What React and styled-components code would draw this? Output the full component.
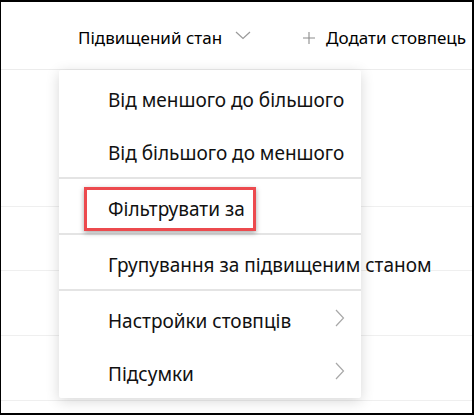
import React from 'react'
import styled, { createGlobalStyle } from 'styled-components'

const GlobalStyle = createGlobalStyle`
  html, body {
    margin: 0;
    padding: 0;
    background: #fff;
  }
  body {
    font-family: "Noto Sans", "Open Sans", sans-serif;
    color: #000;
  }
`

const rows = [137, 64, 65, 65]

const sortItems = ['Від меншого до більшого', 'Від більшого до меншого']

export default function App() {
  return (
    <>
      <GlobalStyle />
      <Frame>
        <Header>
          <ColumnTitle>Підвищений стан</ColumnTitle>
          <HeaderChevron width="16" height="9" viewBox="0 0 16 9">
            <path d="M1 1 L8 7.5 L15 1" />
          </HeaderChevron>
          <AddColumn>
            <PlusIcon width="12" height="12" viewBox="0 0 12 12">
              <path d="M6 0 V12 M0 6 H12" />
            </PlusIcon>
            Додати стовпець
          </AddColumn>
        </Header>

        {rows.map((h, i) => (
          <GridRow key={i} $height={h} />
        ))}

        <Menu>
          <Section>
            {sortItems.map((label) => (
              <Item key={label}>{label}</Item>
            ))}
          </Section>
          <Divider />
          <Section>
            <Highlight />
            <Item>Фільтрувати за</Item>
          </Section>
          <Divider />
          <Section>
            <Item>Групування за підвищеним станом</Item>
          </Section>
          <Divider />
          <Section>
            <Item>
              Настройки стовпців
              <Chevron width="10" height="18" viewBox="0 0 10 18">
                <path d="M1 1 L8.5 9 L1 17" />
              </Chevron>
            </Item>
            <Item>
              Підсумки
              <Chevron width="10" height="18" viewBox="0 0 10 18">
                <path d="M1 1 L8.5 9 L1 17" />
              </Chevron>
            </Item>
          </Section>
        </Menu>
      </Frame>
    </>
  )
}

const Frame = styled.div`
  position: relative;
  width: 474px;
  height: 415px;
  box-sizing: border-box;
  border: 2px solid #000;
  border-left-width: 1px;
  overflow: hidden;
  background: #fff;
`

const Header = styled.div`
  display: flex;
  align-items: center;
  height: 68px;
  box-sizing: border-box;
  padding-left: 77px;
  padding-top: 4px;
  border-bottom: 1px solid #ececec;
`

const ColumnTitle = styled.span`
  font-size: 17px;
  white-space: nowrap;
`

const HeaderChevron = styled.svg`
  margin-left: 13px;
  margin-top: -4px;
  fill: none;
  stroke: #9a9a9a;
  stroke-width: 1.2;
`

const AddColumn = styled.div`
  display: flex;
  align-items: center;
  gap: 11px;
  margin-left: 52px;
  font-size: 17px;
  white-space: nowrap;
`

const PlusIcon = styled.svg`
  fill: none;
  stroke: #8c8c8c;
  stroke-width: 1.1;
`

const GridRow = styled.div`
  height: ${(p) => p.$height - 1}px;
  border-bottom: 1px solid #efefef;
`

const Menu = styled.div`
  position: absolute;
  left: 58px;
  top: 68px;
  width: 302px;
  background: #fff;
  box-shadow: 0 3px 14px rgba(0, 0, 0, 0.16);
  border-radius: 2px;
`

const Section = styled.div`
  position: relative;
  display: flex;
  flex-direction: column;
  gap: 31px;
  padding: 19px 0 13px;
`

const Divider = styled.div`
  height: 2px;
  background: #e4e4e4;
`

const Item = styled.div`
  position: relative;
  display: flex;
  align-items: center;
  height: 22px;
  padding-left: 49px;
  padding-right: 16px;
  font-size: 19px;
  line-height: 22px;
  white-space: nowrap;
  color: #111;
`

const Chevron = styled.svg`
  margin-left: auto;
  margin-top: -6px;
  fill: none;
  stroke: #a8a8a8;
  stroke-width: 1.2;
`

const Highlight = styled.div`
  position: absolute;
  left: 25px;
  top: 8px;
  width: 172px;
  height: 44px;
  box-sizing: border-box;
  border: 3px solid #ec4a4e;
  box-shadow: 0 2px 5px rgba(0, 0, 0, 0.35);
`
